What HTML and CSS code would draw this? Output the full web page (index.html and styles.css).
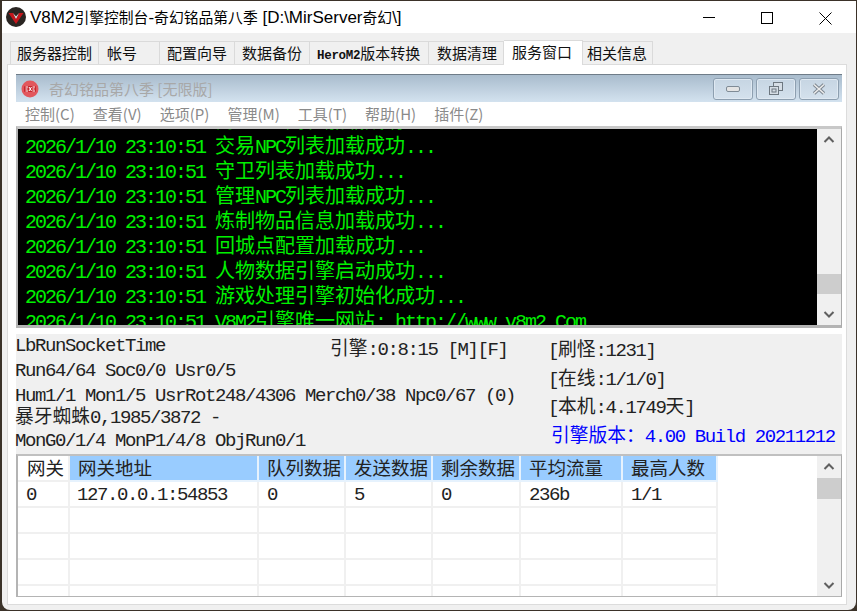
FILE: index.html
```html
<!DOCTYPE html>
<html lang="zh">
<head>
<meta charset="utf-8">
<title>V8M2引擎控制台</title>
<link rel="stylesheet" href="styles.css">
</head>
<body>
<div class="window">
  <header class="titlebar">
    <svg class="app-icon" width="20" height="20" viewBox="0 0 20 20"><circle cx="10" cy="10" r="10" fill="#2a2522"/><path d="M2.5 6 L7 6 L10 12 L13 6 L17.5 6 L10 17 Z" fill="#c4161c"/><path d="M7 6 L10 12 L13 6 L10 9.5 Z" fill="#e8e8e8"/></svg>
    <span class="title-text">V8M2<span class="tc">引擎控制台</span>-<span class="tc">奇幻铭品第八季</span> [D:\MirServer<span class="tc">奇幻</span>\]</span>
    <div class="caption">
      <svg class="cap-btn" width="58" height="32" viewBox="0 0 58 32"><path d="M23 16.5 H35" stroke="#000" fill="none"/></svg>
      <svg class="cap-btn" width="58" height="32" viewBox="0 0 58 32"><rect x="23.5" y="11.5" width="11" height="11" stroke="#000" fill="none"/></svg>
      <svg class="cap-btn" width="58" height="32" viewBox="0 0 58 32"><path d="M23.5 11.5 L35.5 23.5 M35.5 11.5 L23.5 23.5" stroke="#000" fill="none"/></svg>
    </div>
  </header>

  <div class="client">
    <nav class="tabs">
      <div class="tab w89">服务器控制</div>
      <div class="tab w60 inset">帐号</div>
      <div class="tab w75">配置向导</div>
      <div class="tab w75">数据备份</div>
      <div class="tab w118"><span class="tab-latin">HeroM2</span>版本转换</div>
      <div class="tab w75 inset">数据清理</div>
      <div class="tab active w79">服务窗口</div>
      <div class="tab last w70">相关信息</div>
    </nav>

    <main class="panel">
      <div class="mdi-title">
        <svg class="mdi-icon" width="18" height="18" viewBox="0 0 18 18"><circle cx="9" cy="9" r="8.5" fill="#e2565c"/><rect x="3" y="6" width="12" height="6" rx="1" fill="#c9252d"/><path d="M4.5 7 H7 M4.5 9 H6.5 M4.5 11 H7 M8 7 L10.5 11 M10.5 7 L8 11 M11.5 7 H14 M11.5 9 H13.5 M11.5 11 H14" stroke="#fff" stroke-width="1" fill="none"/></svg>
        <span class="mdi-text">奇幻铭品第八季 [无限版]</span>
        <div class="mdi-buttons">
          <button class="mdi-btn"><svg width="14" height="8" viewBox="0 0 14 8"><rect x="0.5" y="1.5" width="13" height="5" rx="1.5" fill="#e4e4e4" stroke="#7f8b96"/></svg></button>
          <button class="mdi-btn"><svg width="16" height="14" viewBox="0 0 16 14"><rect x="5.5" y="0.5" width="9" height="8" fill="#d5dde5" stroke="#6d7780"/><rect x="1.5" y="4.5" width="9" height="8" fill="#d5dde5" stroke="#6d7780"/><rect x="4" y="7" width="4" height="3" fill="none" stroke="#6d7780"/></svg></button>
          <button class="mdi-btn"><svg width="16" height="12" viewBox="0 0 16 12"><path d="M3 1.5 L13 10.5 M13 1.5 L3 10.5" stroke="#7d8791" stroke-width="3.6" fill="none"/><path d="M3 1.5 L13 10.5 M13 1.5 L3 10.5" stroke="#ececec" stroke-width="1.6" fill="none"/></svg></button>
        </div>
      </div>

      <div class="menu">
        <span class="menu-item">控制(C)</span>
        <span class="menu-item">查看(V)</span>
        <span class="menu-item">选项(P)</span>
        <span class="menu-item">管理(M)</span>
        <span class="menu-item">工具(T)</span>
        <span class="menu-item">帮助(H)</span>
        <span class="menu-item">插件(Z)</span>
      </div>

      <section class="memo">
        <div class="memo-view">
          <div class="memo-lines">
            <div class="line">2026/1/10 23:10:51 <span class="c20">商人</span>NPC<span class="c20">列表加载成功</span>...</div>
            <div class="line">2026/1/10 23:10:51 <span class="c20">交易</span>NPC<span class="c20">列表加载成功</span>...</div>
            <div class="line">2026/1/10 23:10:51 <span class="c20">守卫列表加载成功</span>...</div>
            <div class="line">2026/1/10 23:10:51 <span class="c20">管理</span>NPC<span class="c20">列表加载成功</span>...</div>
            <div class="line">2026/1/10 23:10:51 <span class="c20">炼制物品信息加载成功</span>...</div>
            <div class="line">2026/1/10 23:10:51 <span class="c20">回城点配置加载成功</span>...</div>
            <div class="line">2026/1/10 23:10:51 <span class="c20">人物数据引擎启动成功</span>...</div>
            <div class="line">2026/1/10 23:10:51 <span class="c20">游戏处理引擎初始化成功</span>...</div>
            <div class="line">2026/1/10 23:10:51 V8M2<span class="c20">引擎唯一网站</span>: http://www.v8m2.Com</div>
          </div>
        </div>
        <div class="scrollbar">
          <svg class="arrow" width="22" height="22" viewBox="0 0 22 22"><path d="M6.5 13 L11 8.5 L15.5 13" stroke="#606060" stroke-width="2" fill="none"/></svg>
          <div class="track memo-track"><div class="thumb"></div></div>
          <svg class="arrow" width="22" height="22" viewBox="0 0 22 22"><path d="M6.5 9 L11 13.5 L15.5 9" stroke="#606060" stroke-width="2" fill="none"/></svg>
        </div>
      </section>

      <section class="status">
        <div class="status-left">
          <div class="s1">LbRunSocketTime</div>
          <div class="s2">Run64/64 Soc0/0 Usr0/5</div>
          <div class="s3">Hum1/1 Mon1/5 UsrRot248/4306 Merch0/38 Npc0/67 (0)</div>
          <div class="s4"><span class="c19">暴牙蜘蛛</span>0,1985/3872 -</div>
          <div class="s5">MonG0/1/4 MonP1/4/8 ObjRun0/1</div>
        </div>
        <div class="status-mid"><span class="c19">引擎</span>:0:8:15 [M][F]</div>
        <div class="status-right">
          <div class="r1">[<span class="c19">刷怪</span>:1231]</div>
          <div class="r2">[<span class="c19">在线</span>:1/1/0]</div>
          <div class="r3">[<span class="c19">本机</span>:4.1749<span class="c19">天</span>]</div>
          <div class="r4"><span class="c19">引擎版本</span><span class="c19">：</span>4.00 Build 20211212</div>
        </div>
      </section>

      <section class="gridbox">
        <div class="grid">
          <div class="row head">
            <div class="cell fixed">网关</div><div class="cell">网关地址</div><div class="cell">队列数据</div><div class="cell">发送数据</div><div class="cell">剩余数据</div><div class="cell">平均流量</div><div class="cell">最高人数</div>
          </div>
          <div class="row">
            <div class="cell">0</div><div class="cell">127.0.0.1:54853</div><div class="cell">0</div><div class="cell">5</div><div class="cell">0</div><div class="cell">236b</div><div class="cell">1/1</div>
          </div>
          <div class="row"><div class="cell"></div><div class="cell"></div><div class="cell"></div><div class="cell"></div><div class="cell"></div><div class="cell"></div><div class="cell"></div></div>
          <div class="row"><div class="cell"></div><div class="cell"></div><div class="cell"></div><div class="cell"></div><div class="cell"></div><div class="cell"></div><div class="cell"></div></div>
          <div class="row"><div class="cell"></div><div class="cell"></div><div class="cell"></div><div class="cell"></div><div class="cell"></div><div class="cell"></div><div class="cell"></div></div>
          <div class="row"><div class="cell"></div><div class="cell"></div><div class="cell"></div><div class="cell"></div><div class="cell"></div><div class="cell"></div><div class="cell"></div></div>
        </div>
        <div class="scrollbar">
          <svg class="arrow" width="22" height="22" viewBox="0 0 22 22"><path d="M6.5 13 L11 8.5 L15.5 13" stroke="#606060" stroke-width="2" fill="none"/></svg>
          <div class="track grid-track"><div class="thumb"></div></div>
          <svg class="arrow" width="22" height="22" viewBox="0 0 22 22"><path d="M6.5 9 L11 13.5 L15.5 9" stroke="#606060" stroke-width="2" fill="none"/></svg>
        </div>
      </section>
    </main>
  </div>
</div>
</body>
</html>
```

FILE: styles.css
```css
* { box-sizing: border-box; }
html, body { margin: 0; padding: 0; height: 100%; overflow: hidden; }
body { background: #3b3229; padding: 1px 1px 1px 2px; }

.window {
  width: 854px;
  height: 609px;
  background: #f0f0f0;
  border-radius: 0 0 8px 8px;
  overflow: hidden;
  display: flex;
  flex-direction: column;
}

.titlebar {
  height: 32px;
  flex: none;
  background: #fff;
  display: flex;
  align-items: center;
  padding-left: 4px;
}
.app-icon { flex: none; }
.title-text {
  margin-left: 4px;
  font: 17px "Liberation Sans", "Noto Sans CJK SC", sans-serif;
  color: #000;
  white-space: nowrap;
}
.tc { font-family: "Noto Sans CJK SC", sans-serif; font-size: 14.8px; }
.caption { margin-left: auto; display: flex; margin-right: 2px; }
.cap-btn { display: block; }

.client {
  flex: 1;
  min-height: 0;
  display: flex;
  flex-direction: column;
  padding: 7px 9px 5px 5px;
}

.tabs { display: flex; height: 24px; padding-left: 3px; align-items: flex-end; flex: none; }
.tab {
  height: 23px;
  border: 1px solid #dadada;
  border-bottom: 0;
  border-left-width: 0;
  background: #f0f0f0;
  font: 15px/21px "Noto Sans CJK SC", sans-serif;
  color: #111;
  padding-left: 7px;
  white-space: nowrap;
  overflow: hidden;
}
.tab:first-child { border-left-width: 1px; padding-left: 6px; }
.tab.inset { padding-left: 8px; }
.tab.active {
  height: 25px;
  background: #fff;
  line-height: 21px;
  padding-left: 8px;
  position: relative;
  z-index: 1;
  margin-bottom: -1px;
}
.tab.last { padding-left: 4px; }
.tab-latin { font: bold 12.5px "Liberation Mono", monospace; letter-spacing: -0.3px; }
.w89 { width: 89px; }
.w60 { width: 61px; }
.w75 { width: 75px; }
.w118 { width: 119px; }
.w79 { width: 79px; }
.w70 { width: 70px; }

.panel {
  flex: 1;
  min-height: 0;
  background: #fff;
  border: 1px solid #dcdcdc;
  padding: 9px 4px 7px 8px;
  display: flex;
  flex-direction: column;
}

.mdi-title {
  height: 28px;
  flex: none;
  background: linear-gradient(#a9bccd, #d3e2ef);
  border-top: 1px solid #6f7c88;
  display: flex;
  align-items: center;
  padding-left: 5px;
}
.mdi-icon { flex: none; }
.mdi-text {
  margin-left: 10px;
  font: 15px "Noto Sans CJK SC", sans-serif;
  color: #a8a8a8;
  white-space: nowrap;
}
.mdi-buttons { margin-left: auto; margin-right: 3px; display: flex; gap: 3px; }
.mdi-btn {
  width: 40px;
  height: 22px;
  padding: 0;
  display: flex;
  align-items: center;
  justify-content: center;
  background: linear-gradient(#c6d5e3, #d4e1ed);
  border: 1px solid #8d9fb0;
  border-radius: 3px;
  box-shadow: inset 0 0 0 1px #dfe9f2;
}

.menu {
  height: 24px;
  flex: none;
  background: #fff;
  display: flex;
  align-items: center;
  padding-left: 9px;
  padding-bottom: 2px;
  gap: 18.1px;
}
.menu-item { font: 15px "Noto Sans CJK SC", sans-serif; color: #8a8a8a; white-space: nowrap; }

.memo {
  height: 202px;
  flex: none;
  display: flex;
  border-top: 3px solid #c8c8c8;
  border-right: 1px solid #a9a9a9;
  border-left: 2px solid #b4b4b4;
  border-bottom: 3px solid #b4b4b4;
}
.memo-view { width: 799px; flex: none; background: #000; overflow: hidden; }
.memo-lines { margin-top: -19px; padding-left: 7px; }
.line {
  height: 25px;
  font: 20px/25px "Liberation Mono", "Noto Sans CJK SC", monospace;
  letter-spacing: -2px;
  color: #00f000;
  white-space: pre;
}
.c20 { font: 20px/1 "Noto Sans CJK SC", sans-serif; letter-spacing: 0; }

.scrollbar {
  flex: 1;
  background: #f0f0f0;
  display: flex;
  flex-direction: column;
  align-items: stretch;
}
.arrow { flex: none; display: block; margin: 0 auto; }
.track { flex: 1; position: relative; }
.thumb { position: absolute; left: 0; right: 0; height: 21px; background: #cdcdcd; }
.memo-track .thumb { top: 123px; height: 20px; }
.grid-track .thumb { top: 0; }

.status {
  height: 120px;
  flex: none;
  margin-top: 6px;
  background: #f0f0f0;
  display: flex;
  font: 19px "Liberation Mono", "Noto Sans CJK SC", monospace;
  letter-spacing: -1.4px;
  color: #222;
  white-space: nowrap;
}
.c19 { font: 18.75px/1 "Noto Sans CJK SC", sans-serif; letter-spacing: 0; }
.status-left { width: 314px; flex: none; margin-left: -1px; margin-right: 1px; }
.status-left > div { height: 23px; line-height: 23px; }
.s1 { margin-top: 1px; }
.s2 { margin-top: 2px; }
.s3 { margin-top: 2px; }
.s4 { margin-top: -2px; }
.s5 { margin-top: 1px; }
.status-mid { width: 218px; flex: none; padding-top: 4px; line-height: 24px; }
.status-right { flex: 1; }
.r1 { margin-top: 5px; line-height: 24px; height: 29px; }
.r2 { line-height: 24px; height: 28px; }
.r3 { line-height: 24px; height: 29px; }
.r4 { line-height: 24px; color: #0000ff; padding-left: 3px; }

.gridbox {
  flex: 1;
  min-height: 0;
  display: flex;
  border: 1px solid #a9a9a9;
  border-top: 2px solid #c0c0c0;
  border-left: 2px solid #b4b4b4;
  border-bottom: 1px solid #b4b4b4;
}
.grid { width: 799px; flex: none; background: #fff; overflow: hidden; }
.row {
  display: grid;
  grid-template-columns: 52px 189px 87px 87px 88px 102px 95px;
  width: 700px;
  height: 26px;
}
.cell {
  border-right: 2px solid #f0f0f0;
  border-bottom: 2px solid #f0f0f0;
  padding-left: 8px;
  padding-top: 2px;
  font: 19px/22px "Liberation Mono", "Noto Sans CJK SC", monospace;
  letter-spacing: -1.4px;
  color: #222;
  white-space: nowrap;
  overflow: hidden;
}
.cell:nth-child(2) { padding-left: 7px; }
.head .cell {
  background: #99ccff;
  border-color: #e6f2fd;
  padding: 0 0 0 8px;
  font: 18.5px/23px "Noto Sans CJK SC", sans-serif;
  letter-spacing: 0;
}
.head .cell.fixed { background: #fff; border-color: #f0f0f0; padding-left: 9px; }
```
